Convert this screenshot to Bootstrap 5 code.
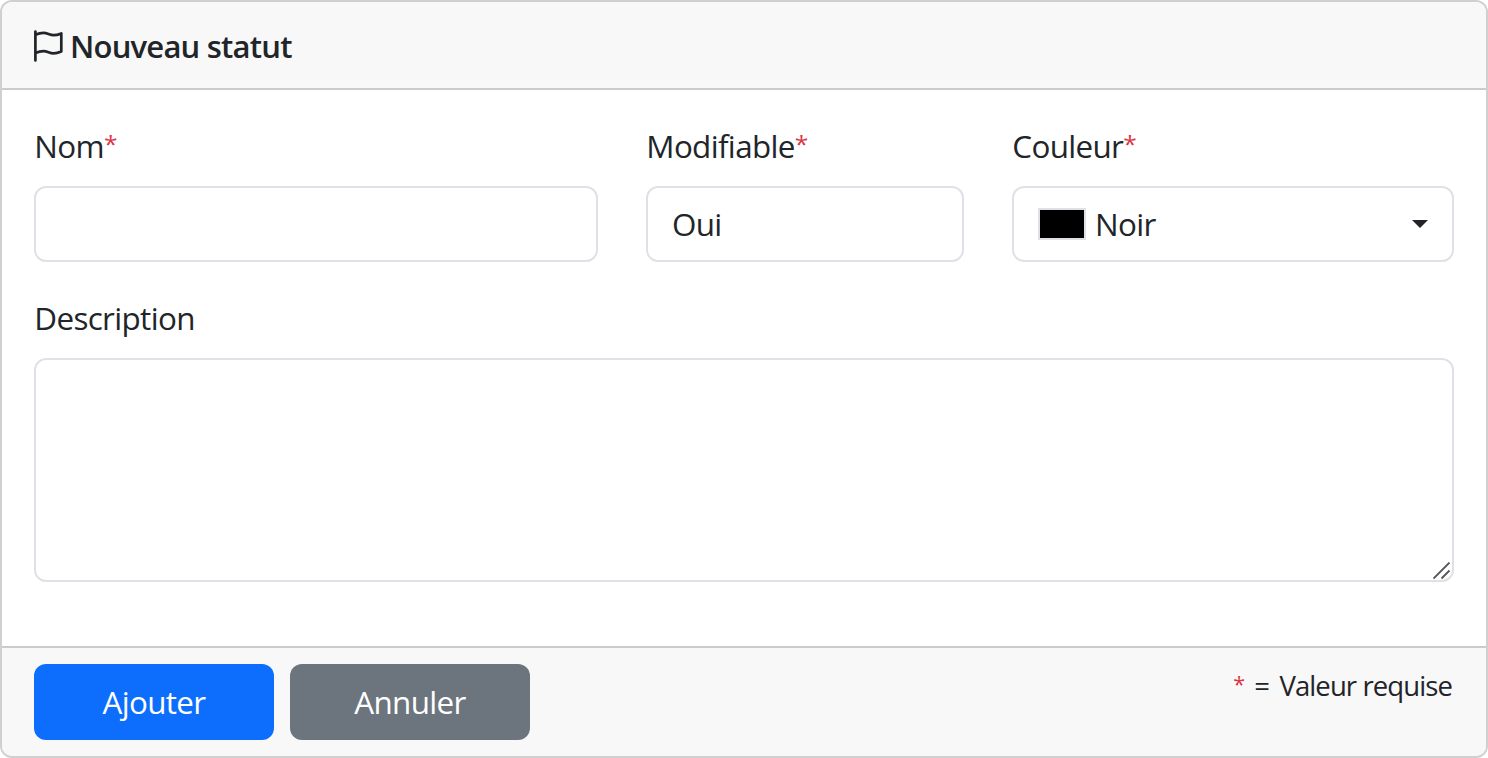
<!DOCTYPE html>
<html lang="fr">
<head>
<meta charset="utf-8">
<meta name="viewport" content="width=device-width, initial-scale=1">
<title>Nouveau statut</title>
<link href="https://cdn.jsdelivr.net/npm/bootstrap@5.3.0/dist/css/bootstrap.min.css" rel="stylesheet">
<style>
  html { font-size: 32px; }
  body { --bs-border-width: 2px; --bs-border-color: #dee2e6; font-family: "Open Sans", "Noto Sans", sans-serif; font-weight: 400; color: #212529; }
  .card { --bs-card-border-width: 2px; --bs-card-border-color: #d0d0d0; --bs-card-inner-border-radius: calc(.375rem - 2px); --bs-card-cap-bg: #f8f8f8; min-height: 758px; }
  .card-header { height: 88px; border-bottom: 2px solid #cbcbcb; }
  .card-footer { border-top: 2px solid #cbcbcb; }
  .form-title { font-size: 31px; font-weight: 600; letter-spacing: -.78px; line-height: 48px; padding-top: 2px; }
  .flag-icon { width: 32px; height: 32px; margin: 2px 4px 0 0; }
  .form-label, .form-control, .card-footer .btn { font-size: 31.4px; font-weight: 400; line-height: 48px; letter-spacing: -.65px; }
  .form-label { display: block; padding-left: .3px; }
  .form-control { border: 2px solid #dee2e6; height: 76px; color: #212529; }
  textarea.form-control { height: 224px; resize: none; }
  .field-name { width: 612px; }
  .field-editable { width: 366px; }
  .field-color { width: 490px; }
  .swatch { width: 48px; height: 32px; background: #000; border: 2px solid #dee2e6; margin-right: 9px; }
  .color-toggle::after { content: ""; margin-left: auto; border-top: 8px solid #212529; border-left: 8px solid transparent; border-right: 8px solid transparent; }
  .grip { right: 3px; bottom: 2px; width: 18px; height: 18px; }
  .card-footer .btn { width: 240px; height: 76px; padding: 12px 0; border: 0; border-radius: .375rem; }
  .star { font-size: .78em; line-height: 1; vertical-align: .2em; letter-spacing: 0; }
  .required-note { font-size: 27.5px; line-height: 42px; letter-spacing: -.9px; padding: 1px 2px 0 0; }
  .equals { margin: 0 4px 0 3px; }
</style>
</head>
<body>
<form class="card">
  <div class="card-header d-flex align-items-center px-3">
    <svg class="flag-icon" viewBox="0 0 32 32" fill="none" stroke="currentColor" stroke-width="2.7" stroke-linecap="round" stroke-linejoin="round" aria-hidden="true"><path d="M1.4 1.5v29M1.4 4.7C4 3.6 7 2.9 9.5 2.9c4 0 6 2.3 10 2.3 2.6 0 5.2-.7 7.8-1.8v18.2c-2.6 1.1-5.2 1.8-7.8 1.8-4 0-6-2.3-10-2.3-2.5 0-5.5.7-8.1 1.8"/></svg>
    <h1 class="form-title mb-0">Nouveau statut</h1>
  </div>
  <div class="card-body p-3">
    <div class="row">
      <div class="col-auto field-name mb-3">
        <label class="form-label" for="nom">Nom<span class="star text-danger">*</span></label>
        <input class="form-control" id="nom" type="text">
      </div>
      <div class="col-auto field-editable mb-3">
        <label class="form-label" for="modifiable">Modifiable<span class="star text-danger">*</span></label>
        <div class="form-control" id="modifiable">Oui</div>
      </div>
      <div class="col-auto field-color mb-3">
        <label class="form-label" for="couleur">Couleur<span class="star text-danger">*</span></label>
        <button class="form-control color-toggle d-flex align-items-center text-start" id="couleur" type="button"><span class="swatch"></span>Noir</button>
      </div>
    </div>
    <label class="form-label" for="description">Description</label>
    <div class="position-relative">
      <textarea class="form-control" id="description"></textarea>
      <svg class="grip position-absolute" viewBox="0 0 18 18" stroke="#555" stroke-width="1.8" aria-hidden="true"><path d="M.5 16.5 16.5.5M8.5 16.5l8-8"/></svg>
    </div>
  </div>
  <div class="card-footer d-flex align-items-start px-3 py-2">
    <button class="btn btn-primary me-2" type="submit">Ajouter</button>
    <button class="btn btn-secondary" type="button">Annuler</button>
    <div class="required-note ms-auto"><span class="star text-danger">*</span> <span class="equals">=</span> Valeur requise</div>
  </div>
</form>
<script src="https://cdn.jsdelivr.net/npm/bootstrap@5.3.0/dist/js/bootstrap.bundle.min.js"></script>
</body>
</html>
